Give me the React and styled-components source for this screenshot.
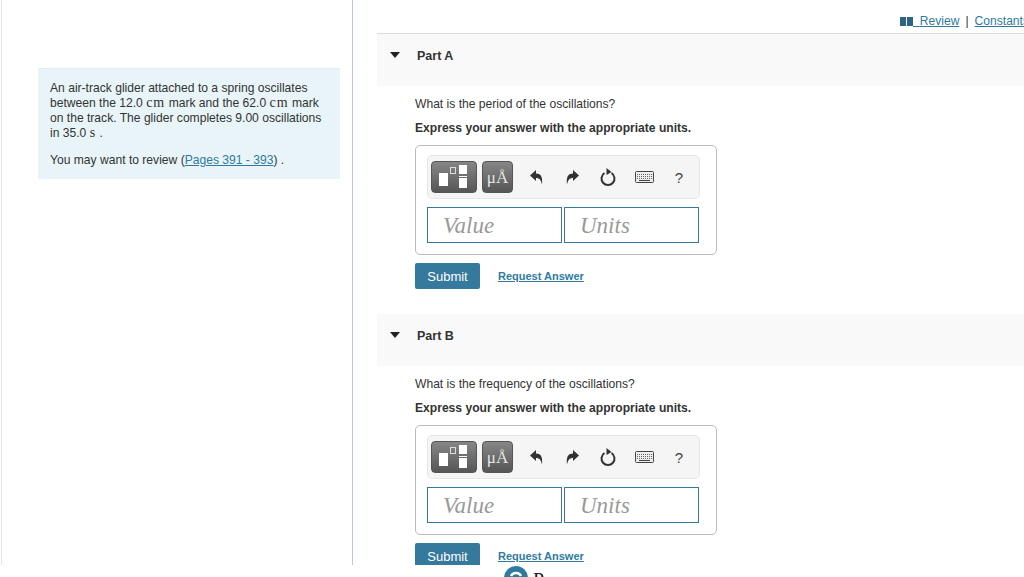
import React from 'react';
import styled, { createGlobalStyle } from 'styled-components';

const GlobalStyle = createGlobalStyle`
  html, body {
    margin: 0;
    padding: 0;
    background: #fff;
    overflow: hidden;
  }
  body {
    font-family: "Liberation Sans", Arial, sans-serif;
    color: #333;
  }
`;

const Page = styled.div`
  width: 1024px;
  height: 577px;
  overflow: hidden;
`;

const Main = styled.div`
  display: flex;
  height: 565px;
  overflow: hidden;
`;

const LeftColumn = styled.div`
  box-sizing: border-box;
  flex: 0 0 352px;
  margin-left: 1px;
  padding: 68px 12px 0 36px;
  border-left: 1px solid #e4e4e4;
  border-right: 1px solid #b8c9de;
`;

const InfoCard = styled.div`
  box-sizing: border-box;
  height: 111px;
  padding: 12px 18px 0 12px;
  background: #e8f4f7;
  border-top: 1px solid #e2eef1;
  font-size: 12.1px;
  line-height: 15px;
  color: #333;

  p {
    margin: 0 0 12px;
  }
`;

const Mono = styled.span`
  font-family: "Liberation Serif", serif;
  font-size: 14px;
  line-height: 0;
  letter-spacing: 1px;
`;

const TextLink = styled.a`
  color: #2f7ba0;
  text-decoration: underline;
`;

const RightColumn = styled.div`
  flex: 1;
  min-width: 0;
  padding-left: 24px;
`;

const TopLinks = styled.div`
  display: flex;
  justify-content: flex-end;
  align-items: center;
  height: 34px;
  box-sizing: border-box;
  padding-top: 9px;
  border-bottom: 1px solid #dedede;
  font-size: 12.1px;
  white-space: pre;
  overflow: hidden;
  color: #333;
`;

const Separator = styled.span`
  margin: 0 6px;
`;

const ConstantsLink = styled(TextLink)`
  margin-right: -5px;
`;

const Part = styled.section`
  margin-bottom: 25px;
`;

const PartHeader = styled.div`
  display: flex;
  align-items: flex-start;
  height: 52px;
  box-sizing: border-box;
  padding: 15px 0 0 13px;
  background: #f9f9f9;
  font-size: 12.5px;
  font-weight: bold;
  line-height: 15px;
  color: #333;
`;

const Caret = styled.span`
  width: 0;
  height: 0;
  margin: 3px 17px 0 0;
  border-left: 5px solid transparent;
  border-right: 5px solid transparent;
  border-top: 6px solid #222;
`;

const PartBody = styled.div`
  padding: 11px 0 0 38px;
  font-size: 12.1px;
  line-height: 15px;
  color: #333;
`;

const Question = styled.p`
  margin: 0 0 9px;
`;

const Instruction = styled.p`
  margin: 0 0 9px;
  font-weight: bold;
`;

const AnswerBox = styled.div`
  box-sizing: border-box;
  width: 302px;
  height: 110px;
  padding: 9px 11px;
  border: 1px solid #bcbcbc;
  border-radius: 5px;
`;

const Toolbar = styled.div`
  display: flex;
  align-items: center;
  box-sizing: border-box;
  height: 44px;
  width: 273px;
  padding: 0 0 0 3px;
  background: #f5f5f5;
  border: 1px solid #e6e6e6;
  border-radius: 5px;
`;

const ToolButton = styled.div`
  display: flex;
  flex: none;
  align-items: center;
  justify-content: center;
  box-sizing: border-box;
  width: ${props => props.$width}px;
  height: 32px;
  margin-right: ${props => props.$gap}px;
  background: linear-gradient(#868686, #565656);
  border: 1px solid #555;
  border-radius: 4px;
  color: #e6e6e6;
`;

const UnitGlyph = styled.span`
  font-family: "Liberation Serif", serif;
  font-size: 17px;
  line-height: 1;
`;

const ActionIcons = styled.div`
  display: flex;
  align-items: center;
  padding-left: 5px;
`;

const IconSlot = styled.div`
  display: flex;
  flex: none;
  align-items: center;
  justify-content: center;
  width: 36px;
`;

const Help = styled.span`
  margin-left: -2px;
  font-size: 15px;
  color: #444;
`;

const Inputs = styled.div`
  display: flex;
  gap: 2px;
  margin-top: 8px;
`;

const Field = styled.div`
  box-sizing: border-box;
  width: 135px;
  height: 36px;
  padding-left: 15px;
  border: 1px solid #35799c;
  font-family: "Liberation Serif", serif;
  font-style: italic;
  font-size: 23px;
  line-height: 36px;
  color: #999;
`;

const Actions = styled.div`
  display: flex;
  align-items: center;
  gap: 19px;
  margin-top: 8px;
`;

const SubmitButton = styled.button`
  width: 65px;
  height: 26px;
  padding: 0;
  border: none;
  border-radius: 2px;
  background: #35799c;
  color: #fff;
  font-family: inherit;
  font-size: 13px;
`;

const RequestLink = styled(TextLink)`
  font-size: 11px;
  font-weight: bold;
  margin-left: -1px;
`;

const Footer = styled.div`
  display: flex;
  gap: 5px;
  height: 12px;
  padding: 1px 0 0 504px;
  box-sizing: border-box;
  overflow: hidden;
`;

const FooterName = styled.span`
  margin-top: 2px;
  font-family: "Liberation Serif", serif;
  font-size: 20px;
  line-height: 24px;
  color: #222;
`;

const MatrixIcon = () => (
  <svg width="44" height="30" viewBox="0 0 44 30">
    <rect x="7" y="11" width="9" height="13" fill="#fff" />
    <rect x="18.500" y="5.500" width="5" height="6" fill="none" stroke="#ddd" />
    <rect x="27" y="3" width="8" height="9" fill="#fff" />
    <rect x="27" y="14" width="8" height="1" fill="#fff" />
    <rect x="27" y="16" width="8" height="10" fill="#fff" />
  </svg>
);

const ArrowIcon = ({ flip }) => (
  <svg width="13" height="15" viewBox="0 0 13 15" style={flip ? { transform: 'scaleX(-1)' } : undefined}>
    <path d="M0 5.500 6 0v3.500c4.500 0 7 3 6 11C11 10 9.500 8 6 8v3z" fill="#333" />
  </svg>
);

const ResetIcon = () => (
  <svg width="16" height="18" viewBox="0 0 16 18">
    <path d="M4.500 5a6.500 6.500 0 1 0 7 0" fill="none" stroke="#333" strokeWidth="2" />
    <path d="M6.500 0 11.500 4 6.500 7z" fill="#333" />
  </svg>
);

const KeyboardIcon = () => (
  <svg width="19" height="12" viewBox="0 0 19 12">
    <rect x="0.500" y="0.500" width="18" height="11" rx="1" fill="#eee" stroke="#444" />
    <path d="M2 3.500h15M2 5.500h15M2 7.500h15" stroke="#666" strokeWidth="1" strokeDasharray="1 1" />
    <path d="M4 9.500h11" stroke="#444" strokeWidth="1" />
  </svg>
);

const BookIcon = () => (
  <svg width="13" height="9" viewBox="0 0 13 9">
    <path d="M0 0h6v9H0zM7 0h6v9H7z" fill="#2a6584" />
  </svg>
);

const LogoIcon = () => (
  <svg width="24" height="24" viewBox="0 0 24 24">
    <circle cx="12" cy="12" r="12" fill="#2f7ba0" />
    <path d="M7 10a5.500 5 0 0 1 10 0" fill="none" stroke="#fff" strokeWidth="2.500" />
  </svg>
);

const AnswerPart = ({ name, question }) => (
  <Part>
    <PartHeader>
      <Caret />
      {name}
    </PartHeader>
    <PartBody>
      <Question>{question}</Question>
      <Instruction>Express your answer with the appropriate units.</Instruction>
      <AnswerBox>
        <Toolbar>
          <ToolButton $width={46} $gap={5}><MatrixIcon /></ToolButton>
          <ToolButton $width={31} $gap={0}><UnitGlyph>μÅ</UnitGlyph></ToolButton>
          <ActionIcons>
            <IconSlot><ArrowIcon /></IconSlot>
            <IconSlot><ArrowIcon flip /></IconSlot>
            <IconSlot><ResetIcon /></IconSlot>
            <IconSlot><KeyboardIcon /></IconSlot>
            <IconSlot><Help>?</Help></IconSlot>
          </ActionIcons>
        </Toolbar>
        <Inputs>
          <Field>Value</Field>
          <Field>Units</Field>
        </Inputs>
      </AnswerBox>
      <Actions>
        <SubmitButton>Submit</SubmitButton>
        <RequestLink href="#">Request Answer</RequestLink>
      </Actions>
    </PartBody>
  </Part>
);

export default function App() {
  return (
    <Page>
      <GlobalStyle />
      <Main>
        <LeftColumn>
          <InfoCard>
            <p>
              An air-track glider attached to a spring oscillates between the 12.0 <Mono>cm</Mono> mark
              and the 62.0 <Mono>cm</Mono> mark on the track. The glider completes 9.00 oscillations
              in 35.0 <Mono>s</Mono> .
            </p>
            <p>
              You may want to review (<TextLink href="#">Pages 391 - 393</TextLink>) .
            </p>
          </InfoCard>
        </LeftColumn>
        <RightColumn>
          <TopLinks>
            <BookIcon />
            <TextLink href="#">{'  '}Review</TextLink>
            <Separator>|</Separator>
            <ConstantsLink href="#">Constants</ConstantsLink>
          </TopLinks>
          <AnswerPart name="Part A" question="What is the period of the oscillations?" />
          <AnswerPart name="Part B" question="What is the frequency of the oscillations?" />
        </RightColumn>
      </Main>
      <Footer>
        <LogoIcon />
        <FooterName>Pearson</FooterName>
      </Footer>
    </Page>
  );
}
